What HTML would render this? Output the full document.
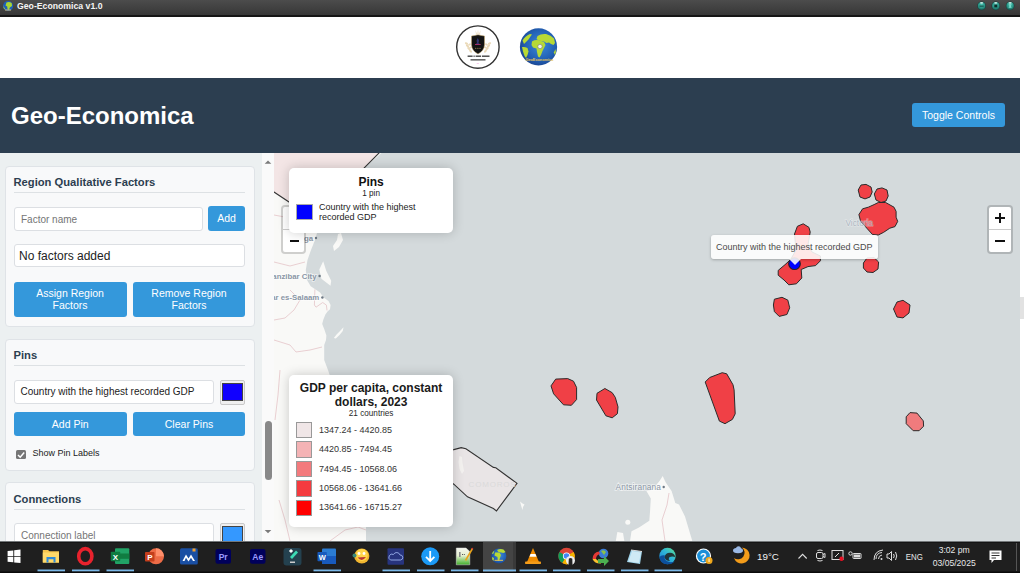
<!DOCTYPE html>
<html><head><meta charset="utf-8">
<style>
*{box-sizing:border-box;margin:0;padding:0}
html,body{width:1024px;height:573px;overflow:hidden;background:#fff;font-family:"Liberation Sans",sans-serif;position:relative}
.a{position:absolute}
#titlebar{left:0;top:0;width:1020px;height:16px;background:linear-gradient(#4b4b4b,#3a3a3a 60%,#2e2e2e);border-bottom:1px solid #111}
#titlebar .t{left:17px;top:2px;font-size:10px;font-weight:bold;color:#f4f4f4;letter-spacing:-0.1px}
#whiteband{left:0;top:17px;width:1020px;height:61px;background:#fff}
#header{left:0;top:78px;width:1020px;height:75px;background:#2c3e50}
#header h1{position:absolute;left:12px;top:99px;font-size:24px;font-weight:bold;color:#fff}
.btn{position:absolute;background:#3498db;color:#fff;border-radius:3px;font-size:10.5px;text-align:center;display:flex;align-items:center;justify-content:center;line-height:11.7px}
#sidebar{left:0;top:153px;width:262px;height:388px;background:#ecf0f1}
#sbtrack{left:262px;top:153px;width:12px;height:388px;background:#fafafa}
.card{position:absolute;left:4.5px;width:250px;background:#f8f9fa;border:1px solid #dfe3e7;border-radius:4px}
.h3{position:absolute;left:13.5px;font-size:11.2px;font-weight:bold;color:#2c3e50}
.hr{position:absolute;left:13.5px;width:231.5px;height:1px;background:#dde1e4}
.inp{position:absolute;background:#fff;border:1px solid #dcdfe3;border-radius:3px;font-size:10px;color:#757575;padding-left:6px;display:flex;align-items:center}
#map{left:274px;top:153px;width:746px;height:388px;background:#d4dadc;overflow:hidden}
#taskbar{left:0;top:541px;width:1024px;height:32px;background:#141414}
</style></head><body>
<div id="whiteband" class="a"></div>
<svg class="a" style="left:0;top:0" width="1024" height="78" viewBox="0 0 1024 78">
<defs><linearGradient id="tbg" x1="0" y1="0" x2="0" y2="1"><stop offset="0" stop-color="#4c4c4c"/><stop offset="1" stop-color="#373737"/></linearGradient></defs>
<rect x="0" y="0" width="1020" height="15" fill="url(#tbg)"/>
<rect x="0" y="15" width="1020" height="2" fill="#151515"/>
<!-- app icon -->
<circle cx="8.1" cy="6" r="5.1" fill="#1f5fb8"/>
<path d="M6.5 2.5 Q9.5 1.3 11.8 3.3 L12 6 L9.8 7.5 L9 10 L7.5 9 L7.2 6.5 L5.5 5.5 Z" fill="#a8d534"/>
<path d="M3.5 5 Q3.6 7.5 5 8.5 L4.8 9.5 Q3 8 3.5 5 Z" fill="#a8d534"/>
<rect x="5" y="9.5" width="6" height="1" fill="#d9c27a"/>
<text x="17" y="8.9" font-family="Liberation Sans" font-size="8.7" font-weight="bold" fill="#f5f5f5">Geo-Economica v1.0</text>
<!-- window buttons -->
<defs><radialGradient id="wb" cx="0.5" cy="0.35" r="0.6"><stop offset="0" stop-color="#4cc4b2"/><stop offset="0.7" stop-color="#2a9485"/><stop offset="1" stop-color="#1f6f66"/></radialGradient></defs>
<g>
<circle cx="981.6" cy="5.9" r="4.3" fill="#1a3a37"/>
<circle cx="981.6" cy="5.9" r="3.8" fill="url(#wb)"/>
<ellipse cx="981.6" cy="2.9" rx="1.6" ry="0.8" fill="#dff3ef" opacity="0.85"/>
<rect x="979.5" y="5.5" width="4.2" height="1.3" fill="#1a5a54"/>
<circle cx="995.8" cy="5.9" r="4.3" fill="#1a3a37"/>
<circle cx="995.8" cy="5.9" r="3.8" fill="url(#wb)"/>
<ellipse cx="995.8" cy="2.9" rx="1.6" ry="0.8" fill="#dff3ef" opacity="0.85"/>
<rect x="994.3" y="4.6" width="3" height="2.8" fill="#0e2e2b"/>
<circle cx="1010.1" cy="5.9" r="4.3" fill="#1a3a37"/>
<circle cx="1010.1" cy="5.9" r="3.8" fill="url(#wb)"/>
<ellipse cx="1010.1" cy="2.9" rx="1.6" ry="0.8" fill="#dff3ef" opacity="0.85"/>
<path d="M1008.5 4.2 L1011.7 4.2 L1010.6 5.9 L1011.7 7.8 L1008.5 7.8 L1009.6 5.9 Z" fill="#7fe0d0"/>
</g>
<!-- logo 1 -->
<circle cx="477.9" cy="47.1" r="21.2" fill="#fff" stroke="#333" stroke-width="1.4"/>
<g fill="#ead9b8">
<ellipse cx="466.5" cy="43.5" rx="1.8" ry="1.05" transform="rotate(30 466.5 43.5)"/>
<ellipse cx="467.5" cy="46" rx="1.9" ry="1.05" transform="rotate(40 467.5 46)"/>
<ellipse cx="468.8" cy="48.5" rx="1.9" ry="1.05" transform="rotate(45 468.8 48.5)"/>
<ellipse cx="470.5" cy="51" rx="1.9" ry="1.05" transform="rotate(50 470.5 51)"/>
<ellipse cx="469.5" cy="44.5" rx="1.5" ry="0.9" transform="rotate(-30 469.5 44.5)"/>
<ellipse cx="470.5" cy="47.5" rx="1.5" ry="0.9" transform="rotate(-20 470.5 47.5)"/>
<ellipse cx="489.5" cy="43.5" rx="1.8" ry="1.05" transform="rotate(-30 489.5 43.5)"/>
<ellipse cx="488.5" cy="46" rx="1.9" ry="1.05" transform="rotate(-40 488.5 46)"/>
<ellipse cx="487.2" cy="48.5" rx="1.9" ry="1.05" transform="rotate(-45 487.2 48.5)"/>
<ellipse cx="485.5" cy="51" rx="1.9" ry="1.05" transform="rotate(-50 485.5 51)"/>
<ellipse cx="486.5" cy="44.5" rx="1.5" ry="0.9" transform="rotate(30 486.5 44.5)"/>
<ellipse cx="485.5" cy="47.5" rx="1.5" ry="0.9" transform="rotate(20 485.5 47.5)"/>
<path d="M475.5 30 L477 34.5 L476 34.5 Z M480.5 30 L479 34.5 L480 34.5 Z M478 29.5 L478.6 34 L477.4 34 Z"/>
</g>
<path d="M471.5 36 Q475 35.5 478 34.8 Q481 35.5 484.5 36 L484.5 45 Q484 51 478 54 Q472 51 471.5 45 Z" fill="#141414" stroke="#c9a86a" stroke-width="0.5"/>
<path d="M477.8 38 L479 40.5 L478.5 43 L480.5 44.5 L475.2 44.5 L477 43 L476.6 40.5 Z" fill="#3c3f8c" opacity="0.8"/>
<path d="M475 44.5 L480.7 44.5" stroke="#b0306a" stroke-width="0.9"/>
<g fill="#c9a86a"><circle cx="475.8" cy="48.2" r="0.55"/><circle cx="477.9" cy="48.2" r="0.55"/><circle cx="480" cy="48.2" r="0.55"/></g>
<g fill="#444">
<rect x="467.6" y="55.5" width="5" height="1.4"/><rect x="473.5" y="55.5" width="1.2" height="1.4"/><rect x="475.6" y="55.5" width="5.5" height="1.4"/><rect x="482" y="55.5" width="7.5" height="1.4"/>
<rect x="470.5" y="59.2" width="15" height="1.3"/>
</g>
<rect x="476.7" y="63" width="2.2" height="0.7" fill="#f3b6e6"/>
<!-- logo 2 globe -->
<defs><radialGradient id="gg" cx="0.55" cy="0.45" r="0.62"><stop offset="0" stop-color="#3d8ad8"/><stop offset="0.65" stop-color="#2260b4"/><stop offset="1" stop-color="#183e88"/></radialGradient></defs>
<circle cx="538.5" cy="46.9" r="18.6" fill="url(#gg)"/>
<g fill="#b7d935">
<path d="M537.5 36 Q541 33.5 546 34 Q551 35 554 38.5 L555 43 L553.5 45 L551 44 L549 42.5 L546.5 43 L544 41.5 L541 41 L538.5 40.5 L536.5 39 Z"/>
<path d="M532 41.5 Q535 39.5 539 40.2 L544 42 L545.5 45 L544 48 L542.5 51 L541 55 L539.5 57.5 L538 56.5 L537 52 L536.5 48.5 L533 47.5 L531.5 45 Z"/>
<path d="M522.5 40.5 Q525 36 530 34 L532 34.5 Q530 37 528.5 39.5 L526 42 L524 44 Z"/>
<path d="M522 47 Q525 46.5 527.5 48 L528.5 51.5 L527.5 55 L526 58 L524.5 56 L523 51.5 Z"/>
<path d="M555.5 49 Q556.5 52 555 55 L553.8 52.5 Z"/>
</g>
<circle cx="540" cy="46.5" r="2.2" fill="#f4f4f4" stroke="#666" stroke-width="0.5"/>
<text x="539.3" y="60.6" font-family="Liberation Sans" font-size="3.9" font-weight="bold" fill="#e6c455" text-anchor="middle" letter-spacing="-0.05">GeoEconomica</text>
</svg>

<div id="header" class="a"></div>
<div class="a" style="left:11px;top:101.5px;font-size:24px;font-weight:bold;color:#fff">Geo-Economica</div>
<div class="btn" style="left:912px;top:103px;width:93px;height:24px;padding-top:1.5px">Toggle Controls</div>

<div id="sidebar" class="a"></div>
<div id="sbtrack" class="a"></div>

<!-- card 1 -->
<div class="card" style="top:166px;height:160.5px"></div>
<div class="h3" style="top:176px">Region Qualitative Factors</div>
<div class="hr" style="top:192px"></div>
<div class="inp" style="left:14px;top:207px;width:189px;height:24px">Factor name</div>
<div class="btn" style="left:208px;top:206px;width:37px;height:25px">Add</div>
<div class="inp" style="left:14px;top:244px;width:231px;height:23px;color:#222;font-size:12px;padding-left:4px">No factors added</div>
<div class="btn" style="left:13.6px;top:281.8px;width:113px;height:35.6px;padding-top:1px">Assign Region<br>Factors</div>
<div class="btn" style="left:133px;top:281.8px;width:112px;height:35.6px;padding-top:1px">Remove Region<br>Factors</div>

<!-- card 2 -->
<div class="card" style="top:339px;height:131.5px"></div>
<div class="h3" style="top:349px">Pins</div>
<div class="hr" style="top:365px"></div>
<div class="inp" style="left:14px;top:379.5px;width:199.5px;height:24px;color:#222;font-size:10px;padding-left:5.5px;padding-bottom:1px">Country with the highest recorded GDP</div>
<div class="btn" style="left:14px;top:412px;width:112.5px;height:24px;padding-top:1px">Add Pin</div>
<div class="btn" style="left:133px;top:412px;width:112px;height:24px;padding-top:1px">Clear Pins</div>

<!-- card 3 -->
<div class="card" style="top:482px;height:80px"></div>
<div class="h3" style="top:492.6px">Connections</div>
<div class="hr" style="top:508.6px"></div>
<div class="inp" style="left:14px;top:523px;width:200px;height:24px">Connection label</div>


<!-- color swatches -->
<div class="a" style="left:219.5px;top:379.5px;width:25.5px;height:25px;background:#efefef;border:1px solid #c9c9c9;border-radius:2px"></div>
<div class="a" style="left:222px;top:382.5px;width:20.8px;height:18px;background:#1000ff;border:0.6px solid #444"></div>
<div class="a" style="left:219.5px;top:522.5px;width:25.5px;height:25px;background:#efefef;border:1px solid #c9c9c9;border-radius:2px"></div>
<div class="a" style="left:222px;top:525.5px;width:20.8px;height:18px;background:#3498ff;border:0.6px solid #444"></div>
<!-- checkbox -->
<div class="a" style="left:16px;top:449.5px;width:10px;height:9.5px;background:#767676;border-radius:1.5px"></div>
<svg class="a" style="left:16px;top:449.5px" width="10" height="10" viewBox="0 0 10 10"><path d="M2 5 L4.2 7.2 L8.2 2.6" fill="none" stroke="#fff" stroke-width="1.5"/></svg>
<div class="a" style="left:32.5px;top:448px;font-size:9px;color:#222">Show Pin Labels</div>
<!-- scrollbar -->
<div class="a" style="left:264.5px;top:420.5px;width:7px;height:59.5px;background:#898989;border-radius:3.5px"></div>
<svg class="a" style="left:262px;top:153px" width="12" height="388" viewBox="0 0 12 388"><path d="M2.7 10.8 L6 7.6 L9.3 10.8 Z" fill="#7a7a7a"/><path d="M2.7 377 L6 380.3 L9.3 377 Z" fill="#7a7a7a"/></svg>
<div id="map" class="a"></div>
<svg class="a" style="left:0;top:0" width="1024" height="573" viewBox="0 0 1024 573">
<defs><clipPath id="mc"><rect x="274" y="153" width="746" height="388"/></clipPath></defs>
<g clip-path="url(#mc)">
<rect x="274" y="153" width="746" height="388" fill="#d4dadc"/>
<!-- mainland Africa -->
<path d="M270 150 L385 150 L364 168 L340 196 L320 224 L317 233 L315 240 L311 250 L307.5 260 L305.8 270 L307 280 L310.7 286.3 L320.1 292.6 L323.3 297.3 L328.5 301 L330.6 305.1 L330 309.3 L327.5 311.4 L325.4 314.6 L323.3 319.8 L322.2 324 L324.3 329.2 L326.4 335.5 L326 340 L324.2 345 L324.2 360 L328 370 L330 376 L345 420 L355 470 L362 510 L366 527 L366 545 L270 545 Z" fill="#f9f9f7"/>
<!-- admin boundaries -->
<g fill="none" stroke="#e4c4c8" stroke-width="0.8">
<path d="M274 215 L290 218 L300 226 L316 224"/>
<path d="M274 262 L290 266 L305 262"/>
<path d="M290 290 L300 300 L294 310 L285 318 L274 320"/>
<path d="M274 340 L290 345 L296 352 L310 350 L322 347"/>
<path d="M314.9 289.4 L314.4 305 L316 307.2 L322.7 302.5 L326.4 305.1 L327 310.4"/>
<path d="M280 370 L278 395 L275 420"/>
<path d="M279 500 L285 520 L290 541"/>
<path d="M330 541 L345 530 L358 527 L366 530"/>
</g>
<!-- islands -->
<path d="M323.2 261.3 L319.3 269.6 L321.4 278.7 L330.5 285.7 L331.2 280.8 L326.3 271 Z" fill="#f9f9f7"/>
<path d="M341 233 L343 240 L339 247 L334 251 L333 246 L337 240 L338 234 Z" fill="#f9f9f7"/>
<path d="M343.5 327.3 L342.8 331 L339.5 335 L335.8 338.5 L333.8 338 L337 334 L340.5 330.5 Z" fill="#f9f9f7"/>
<!-- Kenya choropleth -->
<path d="M270 150 L382 150 L364 168 L340 196 L320 222 L300 208 L289 202 L274 192 L270 190 Z" fill="#f3e5e5" stroke="#333" stroke-width="1.1"/>
<!-- Madagascar tip -->
<path d="M662.7 476 L665.6 482.2 L671.6 491.1 L675.3 503 L679 504.5 L685 516.4 L692.3 541 L630 541 L631.5 531.2 L639 527.5 L649.3 520.8 L650 512 L650.8 498.6 L646.4 491.1 L652.3 489.7 L659.7 480.8 Z" fill="#f9f9f7"/>
<path d="M615 545 L617.4 532 L623 533 L625 545 Z" fill="#f9f9f7"/>
<circle cx="627.8" cy="522.3" r="2.5" fill="#f9f9f7"/>
<path d="M669 493 L667 505 L662 520 L665 541" fill="none" stroke="#e4c4c8" stroke-width="0.8"/>
<path d="M520 501.5 L522.5 503.5 L524.5 504.5 L523 507 L522.5 510 L521.5 507 Z" fill="#f9f9f7"/>
<!-- Comoros choropleth -->
<path d="M440 451 L453.8 449.6 L461.2 447.6 L465.9 448.8 L493.4 467.4 L495.8 467.7 L517 483.4 L496.5 510.9 L493.4 508.5 L467.5 496.8 L453.8 484.2 L440 475 Z" fill="#e9e5e6" stroke="#333" stroke-width="1.1"/>
<path d="M459.5 456 L462 457 L462.5 463 L464 471 L462 474 L459.5 469 L458.5 462 Z" fill="#f4f2f0"/>
<!-- red polygons -->
<g fill="#f04046" stroke="#2b2b2b" stroke-width="1">
<path d="M555.7 379.1 L567.7 378.6 L573.5 381.2 L576.6 387.5 L576.6 399.5 L571.4 405.3 L563.5 404.8 L553.6 393.8 L551 385.9 Z"/>
<path d="M604.9 388.5 L612.2 392.7 L615.3 397.4 L618 406.9 L617.4 413.7 L612.2 417.8 L605.9 415.8 L596.5 400 L597 393.3 Z"/>
<path d="M705.2 382 L709.7 377.5 L722.2 372.7 L726.7 373.8 L733 384.8 L734.1 389.9 L735.2 413.8 L732.4 419.4 L725 423.7 L719.4 421.1 Z"/>
<path d="M858.2 190 L861 185 L866 184.4 L871 187 L872.2 192 L870 197 L865 198.9 L860 197 Z"/>
<path d="M874.3 194 L877 189 L882 187.9 L887 190 L888.2 196 L886 201 L881 202.5 L876 200 Z"/>
<path d="M878.3 202.5 L885.6 202.5 L894 207.2 L896.1 211.4 L896.1 217.2 L897.7 221.4 L895 226.6 L889.8 228.2 L883.5 232.4 L878.3 235 L872.5 234.5 L866.8 228.2 L860.5 220.9 L858.9 214.6 L862.6 208.8 L868.3 207.2 L874.1 204.6 Z"/>
<path d="M863.4 263 L867 258 L874 257.6 L878.6 262 L878 269 L873 272.5 L867 272 L863.4 268 Z"/>
<path d="M893.5 309 L897 302 L903 300.3 L910 305 L909 313 L903 317.9 L897 317 Z"/>
<path d="M774.4 299.2 L782 297.3 L787.8 300.1 L789.7 307.8 L786.9 314.5 L779.2 316.4 L774.4 311.6 L773.4 305 Z"/>
<path d="M797.4 226.3 L803.2 223.8 L808.9 227.3 L810.2 232 L808 245 L812 252 L820.4 256 L820.4 260.8 L815.6 265.6 L808 266.6 L801.2 269.5 L801.8 278 L796.4 283.8 L788.8 284.8 L784 280 L778.2 275.2 L778.2 270.4 L785 264.7 L790.7 259.5 L796 250 L794.5 234 Z"/>
</g>
<path d="M906.2 416.8 L910 412.6 L917 413.1 L923.3 420.9 L923.6 426.2 L919.1 430.7 L913.2 430.7 L906.2 423.7 Z" fill="#f07b7d" stroke="#2b2b2b" stroke-width="1"/>
<!-- labels -->
<g font-family="Liberation Sans" font-size="7.8" font-weight="bold" fill="#8a96a5" stroke="#fff" stroke-width="1.6" stroke-opacity="0.6" paint-order="stroke">
<text x="313" y="240.8" text-anchor="end">Tanga</text>
<text x="316.5" y="278.7" text-anchor="end">Zanzibar City</text>
<text x="319.3" y="300.3" text-anchor="end">Dar es-Salaam</text>
<text x="661" y="489.7" text-anchor="end" font-size="8.3" font-weight="normal" letter-spacing="0.1">Antsiranana</text>
<text x="873" y="226" text-anchor="end" font-size="8.3" font-weight="normal" fill="#a9b3bf" stroke-opacity="0.35" stroke-width="1.5" opacity="0.85">Victoria</text>
<text x="492.5" y="487.3" text-anchor="middle" font-size="8" font-weight="normal" fill="#dadada" stroke="none" letter-spacing="0.8">COMOROS</text>
</g>
<g fill="#6d7884"><circle cx="316" cy="238" r="1.2"/><circle cx="319.6" cy="276" r="1.2"/><circle cx="322.4" cy="297.5" r="1.2"/><circle cx="663.7" cy="487" r="1.2"/></g>
<!-- pin -->
<circle cx="794.5" cy="263.7" r="5.8" fill="#0000ff" stroke="#222" stroke-width="1.2"/>
</g>
</svg>



<div class="a" style="left:1020px;top:296.5px;width:4px;height:22px;background:#e2e2e2"></div>
<!-- left zoom control (partially hidden) -->
<div class="a" style="left:281px;top:205px;width:25px;height:48.5px;background:#fff;border:2px solid rgba(0,0,0,0.17);background-clip:padding-box;border-radius:4px"></div>
<div class="a" style="left:282.5px;top:229px;width:22px;height:1px;background:#ccc"></div>
<div class="a" style="left:290px;top:240px;width:9px;height:2px;background:#111"></div>
<!-- Pins legend -->
<div class="a" style="left:289px;top:168px;width:164.2px;height:65px;background:#fff;border-radius:5px;box-shadow:0 0 12px rgba(0,0,0,0.2)"></div>
<div class="a" style="left:289px;top:174.5px;width:164.2px;text-align:center;font-size:12px;font-weight:bold;color:#111">Pins</div>
<div class="a" style="left:289px;top:188.7px;width:164.2px;text-align:center;font-size:8.2px;color:#222">1 pin</div>
<div class="a" style="left:296px;top:203.5px;width:16.5px;height:16.5px;background:#0000ff;border:0.5px solid #aaa"></div>
<div class="a" style="left:319px;top:202px;font-size:9px;line-height:10.3px;color:#222">Country with the highest<br>recorded GDP</div>
<!-- GDP legend -->
<div class="a" style="left:289px;top:374.5px;width:164.2px;height:152px;background:#fff;border-radius:5px;box-shadow:0 0 12px rgba(0,0,0,0.2)"></div>
<div class="a" style="left:289px;top:382.3px;width:164.2px;text-align:center;font-size:12px;font-weight:bold;color:#1a1a1a;line-height:13.2px">GDP per capita, constant<br>dollars, 2023</div>
<div class="a" style="left:289px;top:409.3px;width:164.2px;text-align:center;font-size:8.2px;color:#2a2a2a">21 countries</div>
<div class="a" style="left:295.8px;top:422px;width:16.6px;height:16.4px;background:#f0e6e7;border:1px solid #999"></div>
<div class="a" style="left:295.8px;top:441.4px;width:16.6px;height:16.4px;background:#f4b3b5;border:1px solid #999"></div>
<div class="a" style="left:295.8px;top:460.8px;width:16.6px;height:16.4px;background:#f37a7d;border:1px solid #999"></div>
<div class="a" style="left:295.8px;top:480.2px;width:16.6px;height:16.4px;background:#f43b3f;border:1px solid #999"></div>
<div class="a" style="left:295.8px;top:499.6px;width:16.6px;height:16.4px;background:#ff0000;border:1px solid #999"></div>
<div class="a" style="left:319px;top:420.7px;font-size:9px;line-height:19.4px;color:#333">1347.24 - 4420.85<br>4420.85 - 7494.45<br>7494.45 - 10568.06<br>10568.06 - 13641.66<br>13641.66 - 16715.27</div>
<!-- right zoom control -->
<div class="a" style="left:987px;top:205px;width:25.5px;height:48.5px;background:#fff;border:2px solid rgba(0,0,0,0.17);background-clip:padding-box;border-radius:4px"></div>
<div class="a" style="left:988.5px;top:228.5px;width:22.5px;height:1px;background:#ccc"></div>
<div class="a" style="left:995px;top:216.5px;width:10px;height:2px;background:#111"></div>
<div class="a" style="left:999px;top:212.5px;width:2px;height:10px;background:#111"></div>
<div class="a" style="left:995px;top:240px;width:10px;height:2px;background:#111"></div>
<!-- tooltip -->
<div class="a" style="left:711px;top:235px;width:166.5px;height:24px;background:rgba(255,255,255,0.88);border-radius:3px;box-shadow:0 1px 3px rgba(0,0,0,0.25)"></div>
<div class="a" style="left:716px;top:242px;font-size:9px;color:#4a4a4a">Country with the highest recorded GDP</div>
<div class="a" style="left:788.5px;top:258.5px;width:0;height:0;border-left:6px solid transparent;border-right:6px solid transparent;border-top:6px solid rgba(255,255,255,0.88)"></div>

<svg class="a" style="left:0;top:541px" width="1024" height="32" viewBox="0 541 1024 32">
<rect x="0" y="541" width="1020" height="32" fill="#1f1f1f"/><rect x="0" y="541" width="1020" height="1" fill="#74787a"/><rect x="0" y="542" width="1020" height="1" fill="#141414"/><rect x="0" y="571.5" width="1020" height="1.5" fill="#0a0a0a"/>
<rect x="1020" y="541" width="4" height="32" fill="#ffffff"/>
<!-- active slot -->
<rect x="483" y="542" width="30" height="30" fill="#444"/><rect x="513" y="542" width="3" height="30" fill="#393939"/>
<rect x="1016" y="543" width="1" height="28" fill="#555"/>
<!-- underlines -->
<g fill="#7bb8e8">
<rect x="37.5" y="569.5" width="27.5" height="1.8"/>
<rect x="72" y="569.5" width="27.5" height="1.8"/>
<rect x="106.5" y="569.5" width="27.5" height="1.8"/>
<rect x="313.5" y="569.5" width="27.5" height="1.8"/>
<rect x="382.5" y="569.5" width="27.5" height="1.8"/>
<rect x="417" y="569.5" width="27.5" height="1.8"/>
<rect x="451" y="569.5" width="27.5" height="1.8"/>
<rect x="483" y="569.5" width="33" height="1.8"/>
<rect x="519.5" y="569.5" width="27.5" height="1.8"/>
<rect x="553" y="569.5" width="27.5" height="1.8"/>
<rect x="587" y="569.5" width="27.5" height="1.8"/>
<rect x="621" y="569.5" width="27.5" height="1.8"/>
<rect x="654.5" y="569.5" width="27.5" height="1.8"/>
</g>
<!-- windows logo -->
<g fill="#fff">
<path d="M7.6 551 L13.3 550.4 L13.3 556 L7.6 556 Z"/>
<path d="M14.2 550.3 L20.5 549.6 L20.5 556 L14.2 556 Z"/>
<path d="M7.6 556.8 L13.3 556.8 L13.3 562.3 L7.6 561.7 Z"/>
<path d="M14.2 556.8 L20.5 556.8 L20.5 563 L14.2 562.4 Z"/>
</g>
<!-- explorer -->
<path d="M42.8 550 L48 550 L49.5 551.3 L59 551.3 L59 562.6 L42.8 562.6 Z" fill="#f5c44e"/>
<rect x="42.8" y="552.5" width="16.2" height="10.1" fill="#ffd96a"/>
<path d="M46.5 557 L55.5 557 L55.5 562.6 L53.5 562.6 L53.5 559.2 L48.5 559.2 L48.5 562.6 L46.5 562.6 Z" fill="#2e8ad8"/>
<!-- opera -->
<ellipse cx="85.3" cy="556.2" rx="6.6" ry="7.6" fill="none" stroke="#e8222d" stroke-width="3.6"/>
<!-- excel -->
<rect x="115" y="548.3" width="14.3" height="15.7" rx="1" fill="#21a366"/>
<rect x="115" y="553.5" width="14.3" height="5.3" fill="#107c41"/>
<rect x="110.8" y="551.8" width="9.4" height="9.4" rx="0.8" fill="#107c41"/>
<text x="115.5" y="559.8" font-family="Liberation Sans" font-size="8" font-weight="bold" fill="#fff" text-anchor="middle">X</text>
<!-- powerpoint -->
<circle cx="156" cy="556.3" r="8" fill="#ed6c47"/>
<path d="M156 548.3 A8 8 0 0 1 164 556.3 L156 556.3 Z" fill="#ff8f6b"/>
<rect x="145" y="552" width="9.5" height="9.5" rx="0.8" fill="#c43e1c"/>
<text x="149.8" y="560" font-family="Liberation Sans" font-size="8" font-weight="bold" fill="#fff" text-anchor="middle">P</text>
<!-- M app -->
<rect x="180" y="548.3" width="17.8" height="16.2" rx="1.5" fill="#1a4fa3"/>
<path d="M182.5 561 L186 554.5 L188.5 558.5 L191 554.5 L195 561 L193 561 L191 557.8 L188.5 561.5 L186 557.8 L184.5 561 Z" fill="#fff"/>
<rect x="192.5" y="548.5" width="3" height="3" fill="#f0a030"/>
<!-- Pr -->
<rect x="215.5" y="549" width="15.5" height="14.8" rx="2" fill="#00005b"/>
<text x="223.2" y="560" font-family="Liberation Sans" font-size="8.5" font-weight="bold" fill="#9a9aff" text-anchor="middle">Pr</text>
<!-- Ae -->
<rect x="250" y="549" width="15.5" height="14.8" rx="2" fill="#00005b"/>
<text x="257.8" y="560" font-family="Liberation Sans" font-size="8.5" font-weight="bold" fill="#9a9aff" text-anchor="middle">Ae</text>
<!-- filmora -->
<rect x="283.5" y="548" width="18" height="17.5" rx="3" fill="#24414f"/>
<path d="M290 557 L296 550.5 L298 552.5 L292 559 Z" fill="#3ddbb5"/>
<rect x="289.5" y="549.5" width="3" height="3" fill="#fff" transform="rotate(45 291 551)"/>
<rect x="290" y="561.5" width="5" height="1.5" fill="#ccc"/>
<!-- word -->
<rect x="322" y="548.5" width="14" height="15.5" rx="1" fill="#2b7cd3"/>
<rect x="322" y="556" width="14" height="8" fill="#185abd"/>
<rect x="317.5" y="552" width="9.3" height="9.3" rx="0.8" fill="#185abd"/>
<text x="322.2" y="560" font-family="Liberation Sans" font-size="7.5" font-weight="bold" fill="#fff" text-anchor="middle">W</text>
<!-- emoji -->
<circle cx="361.8" cy="556" r="7.6" fill="#f2b630"/>
<circle cx="361.8" cy="555" r="6" fill="#ffd54a"/>
<path d="M357.5 557.5 Q362 562.5 366 557 Z" fill="#b33"/>
<circle cx="359" cy="553.5" r="1.4" fill="#fff"/><circle cx="364" cy="553.5" r="1.4" fill="#fff"/>
<circle cx="354.5" cy="555.5" r="2" fill="#3b8a7a"/>
<!-- cloud app -->
<rect x="387.5" y="548.3" width="16.5" height="16.5" rx="1" fill="#27347e"/>
<path d="M390.5 560 L400.5 560 A2.5 2.5 0 0 0 400 555 A3.5 3.5 0 0 0 393.5 554.5 A2.8 2.8 0 0 0 390.5 560 Z" fill="none" stroke="#8fa4e0" stroke-width="1"/>
<!-- download -->
<circle cx="430.2" cy="556.3" r="9" fill="#1b9af7"/>
<path d="M430.2 551 L430.2 560.5 M426 556.8 L430.2 561 L434.4 556.8" fill="none" stroke="#fff" stroke-width="1.8"/>
<!-- notepad++ -->
<defs><linearGradient id="npg" x1="0" y1="0" x2="0" y2="1"><stop offset="0" stop-color="#f4f6ee"/><stop offset="0.45" stop-color="#e6f0d0"/><stop offset="1" stop-color="#3fae2a"/></linearGradient></defs>
<path d="M456.3 548 L466 548 L469.8 551.5 L469.8 564.8 L456.3 564.8 Z" fill="url(#npg)" stroke="#ddd" stroke-width="0.5"/>
<path d="M465.5 560.5 L472.5 548.5" stroke="#e8a31c" stroke-width="1.6"/>
<circle cx="472.3" cy="548.6" r="0.9" fill="#c33"/>
<rect x="459" y="552" width="1.6" height="5" fill="#888"/>
<rect x="462" y="554" width="1" height="1" fill="#555"/><rect x="463.8" y="554" width="1" height="1" fill="#555"/>
<!-- globe -->
<circle cx="498.8" cy="556" r="7.6" fill="url(#gg)"/>
<g fill="#b7d935">
<path d="M497 550 Q500 548.5 503.5 549.5 L505.5 552 L503.5 553 L501 552.5 L498.5 552 Z"/>
<path d="M495 552.5 L499.5 552.5 L501 555 L500 558 L499 561 L497.8 560.5 L497.5 557 L494.5 555.5 Z"/>
<path d="M491.8 554 Q492.5 551.5 494.5 550.5 L493.5 553.5 Z"/>
<path d="M492 557 L494 558 L493.5 561 L492.3 559.5 Z"/>
</g>
<rect x="494.5" y="559.8" width="8.5" height="1.1" fill="#e6c455" opacity="0.9"/>
<!-- vlc -->
<path d="M533 548 L539 562 L527 562 Z" fill="#f08c00"/>
<path d="M530.5 554 L535.5 554 L536.5 556.8 L529.5 556.8 Z" fill="#fff"/>
<rect x="525" y="561.5" width="16" height="2.5" rx="0.8" fill="#f39c1a"/>
<!-- chrome -->
<circle cx="566.5" cy="556" r="8.2" fill="#db4437"/>
<path d="M566.5 556 L559.4 551.9 A8.2 8.2 0 0 0 562.4 563.1 Z" fill="#0f9d58"/>
<path d="M566.5 556 L573.6 551.9 A8.2 8.2 0 0 1 562.4 563.1 Z" fill="#f4b400"/>
<circle cx="566.5" cy="556" r="3.6" fill="#fff"/>
<circle cx="566.5" cy="556" r="2.8" fill="#4285f4"/>
<circle cx="570.5" cy="560.5" r="4.5" fill="#eee"/>
<path d="M568.5 565 L568.8 558.8 Q570.5 557 572.3 558.8 L572.5 565 Z" fill="#222"/>
<!-- idm -->
<circle cx="603.5" cy="553.5" r="4.8" fill="#3a7bd5"/>
<path d="M601 551 Q604 549 606 552 L604 555 Z" fill="#8bc34a"/>
<path d="M592.5 559 Q593 552 599 551.5 L600 554 Q596 555 596 559 Z" fill="#e53935"/>
<path d="M592.5 559 Q595 564 601 563.5 L600.5 561 Q597 561 596 559 Z" fill="#fbc02d"/>
<path d="M598 559 L604 559 L604 556 L609 561 L604 566 L604 563 L598 563 Z" fill="#4caf50"/>
<!-- notepad -->
<path d="M627 562 L631 550 L642 551.5 L640 564 Z" fill="#9fd3ea"/>
<path d="M628.5 561.5 L632 551 L641 552.5 L639 563 Z" fill="#cfeaf5"/>
<path d="M631 550 L642 551.5" stroke="#ddd" stroke-width="1"/>
<!-- edge -->
<defs><linearGradient id="edg" x1="1" y1="0" x2="0" y2="1"><stop offset="0" stop-color="#5fe08a"/><stop offset="0.45" stop-color="#2fb6d8"/><stop offset="1" stop-color="#1777d4"/></linearGradient></defs>
<circle cx="667.5" cy="556" r="8.2" fill="url(#edg)"/>
<path d="M659.5 557 Q660 564 667 564.3 Q672 564.5 675 561.5 Q670 563 666.5 561 Q663.5 558.5 665 555.5 Q661.5 554.5 659.5 557 Z" fill="#0c4f9c"/>
<path d="M664.5 557.5 Q665 553 670 552.8 Q674.5 553 675.2 557 Q672 555.8 669 557.5 Q668 559.5 670 561 Q666 561 664.5 557.5 Z" fill="#1f1f1f" opacity="0.85"/>
<!-- help -->
<circle cx="703.5" cy="556" r="7.6" fill="#fff"/>
<circle cx="703.5" cy="556" r="6.4" fill="#1a8fd8"/>
<text x="703.2" y="560.5" font-family="Liberation Sans" font-size="11" font-weight="bold" fill="#fff" text-anchor="middle">?</text>
<circle cx="709" cy="560.5" r="3.5" fill="#f0a81c"/>
<rect x="708.6" y="558.5" width="0.9" height="3.5" fill="#fff"/>
<!-- weather -->
<path d="M742 547.5 A8 8 0 1 1 734 558 A6 6 0 0 0 742 547.5 Z" fill="#f39c1a"/>
<ellipse cx="738" cy="550.5" rx="5" ry="2.8" fill="#9bb9e5"/>
<circle cx="738.5" cy="548.8" r="2.5" fill="#9bb9e5"/>
<text x="757" y="559.8" font-family="Liberation Sans" font-size="9.8" fill="#f2f2f2">19°C</text>
<!-- tray -->
<path d="M798.5 558.5 L802.6 554.3 L806.7 558.5" fill="none" stroke="#ddd" stroke-width="1.1"/>
<g fill="none" stroke="#ddd" stroke-width="1">
<rect x="816.5" y="552.5" width="6.5" height="6" rx="1.5"/>
<path d="M823 554.5 L825 553.5 L825 557.5 L823 556.5"/>
<path d="M817.5 550.5 Q820 549.5 822.5 550.5 M817.5 560.5 Q820 561.5 822.5 560.5"/>
<rect x="832" y="550.5" width="11" height="9" />
<path d="M835 557 L839 553"/>
<rect x="853" y="553.5" width="8" height="5" rx="0.5"/>
<path d="M876 559 Q876 553 882 552.5 M878.5 559 Q878.5 555.5 882 555" />
<path d="M887 554 L889 554 L891.5 551.5 L891.5 560.5 L889 558 L887 558 Z"/>
<path d="M893.5 554 Q895 556 893.5 558 M895.5 552 Q898 556 895.5 560"/>
</g>
<circle cx="841.5" cy="558.8" r="2.2" fill="#e81123"/>
<circle cx="850.5" cy="553.5" r="1.7" fill="none" stroke="#ddd" stroke-width="1"/>
<rect x="854" y="554.5" width="6" height="3" fill="#ddd"/>
<path d="M874 560 Q874 551 883 550" fill="none" stroke="#ddd" stroke-width="1"/>
<circle cx="881.5" cy="559" r="1" fill="#ddd"/>
<text x="905.8" y="559.5" font-family="Liberation Sans" font-size="8.8" fill="#e8e8e8" textLength="17" lengthAdjust="spacingAndGlyphs">ENG</text>
<text x="954.2" y="553.1" font-family="Liberation Sans" font-size="8.6" fill="#e8e8e8" text-anchor="middle">3:02 pm</text>
<text x="954.2" y="566.3" font-family="Liberation Sans" font-size="8.6" fill="#e8e8e8" text-anchor="middle">03/05/2025</text>
<path d="M989.5 550.5 L1001.5 550.5 L1001.5 560 L994 560 L991.5 563 L991.5 560 L989.5 560 Z" fill="#fff"/>
<path d="M991.5 553 L999.5 553 M991.5 555.5 L999.5 555.5 M991.5 558 L996 558" stroke="#1f1f1f" stroke-width="0.9"/>
</svg>

</body></html>
